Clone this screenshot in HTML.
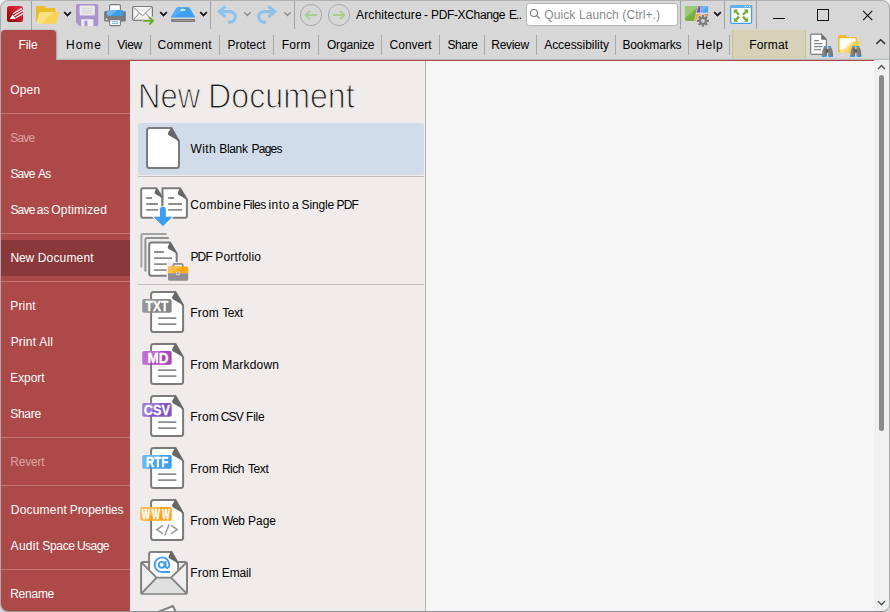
<!DOCTYPE html>
<html lang="en">
<head>
<meta charset="utf-8">
<title>Architecture - PDF-XChange Editor</title>
<style>
html,body{margin:0;padding:0;}
body{width:890px;height:612px;overflow:hidden;background:linear-gradient(#f2f2f2,#d8d8d8);font-family:"Liberation Sans",sans-serif;font-size:12px;color:#000;}
#win{position:absolute;left:0;top:0;width:888px;height:610px;border:1px solid #a8acac;border-top-color:#b0b2b2;border-bottom-color:#8f9292;border-radius:8px;overflow:hidden;background:#d7d7d7;}
#win *{position:absolute;box-sizing:border-box;}
.t{white-space:nowrap;line-height:16px;height:16px;}
/* title bar */
.vsep{width:1px;background:#a6a6a6;}
.chev{width:9px;height:6px;}
/* ribbon */
#ribbon{left:0;top:29px;width:888px;height:30px;}
.tab{top:7px;color:#000;}
.rsep{top:5px;width:1px;height:20px;background:#a9a9a9;}
#filetab{left:0;top:0;width:55px;height:31px;background:#ae4949;border-radius:4px 4px 0 0;box-shadow:1px 0 2px rgba(0,0,0,.25);}
#fmt{left:731px;top:0;width:74px;height:30px;background:#d6d1b7;border-left:1px solid #cdc28e;border-right:1px solid #cdc28e;}
#redline{left:0;top:59px;width:888px;height:1px;background:#b04848;}
#shade{left:56px;top:57px;width:832px;height:2px;background:linear-gradient(#ced0d0,#ced0d0 50%,#b6baba 50%);}
/* sidebar */
#side{left:0;top:60px;width:129px;height:551px;background:#ae4949;}
#side .t{left:10px;color:#fff;}
#side .dis{color:#d9a3a3;}
#side .sp{left:0;width:129px;height:1px;background:#c47474;}
#side .sel{left:0;width:129px;height:36px;background:#8b383a;}
/* middle */
#mid{left:129px;top:60px;width:295px;height:551px;background:#f0eceb;}
#mid .t{left:61px;}
#mid .sp{left:8px;width:286px;height:1px;background:#c2bebe;}
#hl{left:8px;top:62px;width:286px;height:52px;background:#d0dcea;border-radius:2px;}
#title{left:0;top:13px;font-size:34.5px;line-height:44px;height:44px;white-space:nowrap;color:#1c1c1c;-webkit-text-stroke:1.15px #f0eceb;}
#title span{top:0;transform-origin:0 0;}
#vline{left:424px;top:60px;width:1px;height:551px;background:#b4b2b2;}
#right{left:425px;top:60px;width:448px;height:551px;background:#f6f6f6;}
#sb{left:873px;top:59px;width:15px;height:552px;background:#f0f0f0;}
#thumb{left:5px;top:15px;width:5px;height:356px;background:#8a8a8a;border-radius:2.5px;}
</style>
</head>
<body>
<div id="win">
  <!-- TITLEBAR -->
  <!--TB-START-->
  <svg id="tbsvg" width="888" height="29" viewBox="1 1 888 29" style="left:0;top:0;">
    <defs>
      <linearGradient id="gapp" x1="1" y1="0" x2="0" y2="1">
        <stop offset="0" stop-color="#f02c44"/><stop offset=".45" stop-color="#c81c28"/><stop offset="1" stop-color="#7c0808"/>
      </linearGradient>
      <linearGradient id="gfold" gradientUnits="userSpaceOnUse" x1="40.1" y1="11.2" x2="54.8" y2="24.8">
        <stop offset="0" stop-color="#fde38c"/><stop offset=".5" stop-color="#fde080"/><stop offset=".51" stop-color="#fcd455"/><stop offset="1" stop-color="#fcd455"/>
      </linearGradient>
      <path id="chv" d="M0.8 0.9 L3.5 3.6 L6.2 0.9" fill="none" stroke-width="1.8" stroke-linecap="square"/>
      <clipPath id="capp"><rect x="7" y="6" width="16" height="16" rx="2.6"/></clipPath>
    </defs>
    <!-- separators -->
    <g fill="#a2a2a2">
      <rect x="31" y="1" width="1" height="29"/>
      <rect x="210" y="1" width="1" height="28"/>
      <rect x="294" y="1" width="1" height="28"/>
      <rect x="680" y="1" width="1" height="28"/>
      <rect x="724" y="1" width="1" height="28"/>
      <rect x="756" y="1" width="1" height="28"/>
    </g>
    <!-- app icon -->
    <rect x="7" y="6" width="16" height="16" rx="2.6" fill="url(#gapp)"/>
    <path d="M9.8 19 L12.5 14.5 L16.2 18.7 Z" fill="#fff"/>
    <g stroke="#fff" stroke-width="1.25" fill="none" clip-path="url(#capp)">
      <path d="M13 13.7 L21.9 8.4"/><path d="M14.2 15.7 L23.6 10.1"/><path d="M15.9 17.8 L23.6 13.2"/>
    </g>
    <!-- folder -->
    <path d="M36 7.2 Q36 6 37.2 6 H44.2 L46.6 7.9 H54.4 Q55.5 7.9 55.5 9 V22 H36 Z" fill="#ecbc2a"/>
    <path d="M40.6 12 H58.2 Q59.3 12 59 13.1 L56.2 23 Q55.9 23.8 55 23.8 H37.4 Q36.3 23.8 36.6 22.7 L39.4 12.8 Q39.7 12 40.6 12 Z" fill="url(#gfold)"/>
    <use href="#chv" x="64" y="11.8" stroke="#1a1a1a"/>
    <!-- save (disabled) -->
    <path d="M77.5 4 H96.8 Q98.3 4 98.3 5.5 V24.5 Q98.3 26 96.8 26 H79.6 L76 22.4 V5.5 Q76 4 77.5 4 Z" fill="#ab93cf"/>
    <rect x="79.6" y="5.6" width="15.2" height="10" rx="1.2" fill="#e9e9e9"/>
    <path d="M82 8.3 H92.4 M82 10.6 H92.4 M82 12.9 H92.4" stroke="#d2d2d2" stroke-width="1"/>
    <path d="M81.2 19.2 H93.4 V26 H81.2 Z" fill="#ededed"/>
    <rect x="84.4" y="20.8" width="3" height="5.2" fill="#ab93cf"/>
    <!-- printer -->
    <rect x="109.6" y="4.6" width="10.8" height="8" rx="1.2" fill="#fff" stroke="#7a7a7a" stroke-width="1.1"/>
    <path d="M105.6 11 H124.4 Q125.9 11 125.9 12.5 V20.1 Q125.9 21.6 124.4 21.6 H105.6 Q104.1 21.6 104.1 20.1 V12.5 Q104.1 11 105.6 11 Z" fill="#7b7b7b"/>
    <path d="M107 9.9 H122.9 V14.6 Q122.9 15.8 121.7 15.8 H108.2 Q107 15.8 107 14.6 Z" fill="#3e9ff2"/>
    <path d="M107 9.9 H117.6 L110.4 15.8 H108.2 Q107 15.8 107 14.6 Z" fill="#6db7f7"/>
    <rect x="105.8" y="18.6" width="1.5" height="1.5" rx=".5" fill="#fff"/>
    <rect x="109.6" y="19.6" width="10.8" height="6" rx="1.2" fill="#fff" stroke="#7a7a7a" stroke-width="1.1"/>
    <path d="M112 21.7 H118 M112 23.6 H118" stroke="#69b4f5" stroke-width=".9"/>
    <!-- mail -->
    <rect x="132.6" y="6.5" width="19.8" height="13.9" rx="1.3" fill="#f4f4f4" stroke="#7a7a7a" stroke-width="1.2"/>
    <path d="M133.2 7 L142.5 15.8 L151.8 7 M133.4 19.8 L139.4 13 M151.6 19.8 L145.6 13" fill="none" stroke="#858585" stroke-width="1"/>
    <path d="M142.4 19.2 H147.6 L149.6 16.6 H154 V24 H142.4 Z" fill="#d7d7d7"/>
    <path d="M143.2 20.9 H152.6 M149.2 17.2 L153 20.9 L149.2 24.6" fill="none" stroke="#6aab2c" stroke-width="1.9"/>
    <use href="#chv" x="160" y="11.8" stroke="#1a1a1a"/>
    <!-- scanner -->
    <path d="M177.6 7.2 H188.6 Q189.3 7.2 189.7 7.9 L194.9 16.5 Q195.4 17.4 194.4 17.4 H171.8 Q170.8 17.4 171.3 16.5 L176.5 7.9 Q176.9 7.2 177.6 7.2 Z" fill="#3e9ff2"/>
    <path d="M176.5 7.9 Q176.9 7.2 177.6 7.2 H186 L174 17.3 H171.8 Q170.8 17.3 171.3 16.4 Z" fill="#56adf6"/>
    <path d="M181 9.3 H185 L185.6 10.8 H180.4 Z" fill="#fff"/>
    <rect x="171" y="18.9" width="24.2" height="3" rx="1.2" fill="#7b7b7b"/>
    <rect x="172.6" y="19.9" width="21" height="1" fill="#9a9a9a"/>
    <use href="#chv" x="200" y="11.8" stroke="#1a1a1a"/>
    <!-- undo / redo (disabled) -->
    <g fill="none" stroke="#8fc1ea" stroke-width="3.1">
      <path d="M225.6 6.4 L219.2 11.6 L225.6 17 M219.4 11.6 H230.1 A5.25 5.25 0 0 1 230.1 22.1 H228"/>
      <path d="M268.4 6.4 L274.8 11.6 L268.4 17 M274.6 11.6 H263.9 A5.25 5.25 0 0 0 263.9 22.1 H266"/>
    </g>
    <path d="M244.7 12.8 L247.4 15.5 L250.1 12.8 M284.8 12.8 L287.5 15.5 L290.2 12.8" fill="none" stroke="#8e8e8e" stroke-width="1.35" stroke-linecap="square"/>
    <!-- nav circles -->
    <circle cx="311" cy="15" r="10.6" fill="none" stroke="#a9a9a9" stroke-width="1"/>
    <path d="M317 15 H306 M310.2 10.6 L305.6 15 L310.2 19.4" fill="none" stroke="#a8cd8c" stroke-width="1.8"/>
    <circle cx="339" cy="15" r="10.6" fill="none" stroke="#a9a9a9" stroke-width="1"/>
    <path d="M333 15 H344 M339.8 10.6 L344.4 15 L339.8 19.4" fill="none" stroke="#a8cd8c" stroke-width="1.8"/>
    <!-- quick launch -->
    <rect x="526.5" y="3.5" width="151" height="22" rx="3" fill="#fff" stroke="#b4b4b4"/>
    <circle cx="534" cy="13" r="3.5" fill="none" stroke="#7c7c7c" stroke-width="1.05"/>
    <path d="M536.5 15.5 L539.7 18.7" stroke="#7c7c7c" stroke-width="1.15"/>
    <!-- ui options -->
    <path d="M686.4 6 H697.4 L694.2 21 H686.4 Q685 21 685 19.6 V7.4 Q685 6 686.4 6 Z" fill="#79af40"/>
    <path d="M686.4 6 H697.4 L697 7.8 L685 18.4 V7.4 Q685 6 686.4 6 Z" fill="#9dc873"/>
    <path d="M698.3 6 H700.3 V12.6 H696.7 Z" fill="#7a48c4"/>
    <path d="M698.3 6 H700.3 V7.6 L697.6 9 Z" fill="#9468d6"/>
    <rect x="701.2" y="6" width="6.9" height="6.6" fill="#49a5f3"/>
    <path d="M701.2 6 H708.1 L701.2 12.2 Z" fill="#6db8f6"/>
    <path d="M696.4 14.1 H700.3 V21 H694.8 Z" fill="#fba626"/>
    <rect x="701.2" y="14.1" width="6.9" height="2" fill="#f2683c"/>
    <g transform="translate(702.95,20.85)">
      <g fill="#d7d7d7" stroke="#d7d7d7" stroke-width="1.6">
        <circle r="4.2"/>
        <g id="teeth"><rect x="-1.15" y="-5.9" width="2.3" height="11.8"/><rect x="-5.9" y="-1.15" width="11.8" height="2.3"/></g>
        <use href="#teeth" transform="rotate(45)"/>
      </g>
      <g fill="#7d7d7d">
        <circle r="4.2"/>
        <use href="#teeth"/>
        <use href="#teeth" transform="rotate(45)"/>
      </g>
      <circle r="1.9" fill="#d7d7d7"/>
    </g>
    <use href="#chv" x="714" y="11.8" stroke="#1a1a1a"/>
    <!-- fullscreen -->
    <rect x="730.65" y="5.65" width="20.9" height="17.7" rx="1.3" fill="#fff" stroke="#3e9ff2" stroke-width="1.3"/>
    <path d="M730 7.9 V6.3 Q730 5 731.3 5 H750.9 Q752.2 5 752.2 6.3 V7.9 Z" fill="#62b0f5"/>
    <g fill="#fff"><rect x="744.8" y="5.9" width="1.1" height="1.1"/><rect x="746.8" y="5.9" width="1.1" height="1.1"/><rect x="748.8" y="5.9" width="1.1" height="1.1"/></g>
    <g fill="#76ad3e">
      <path id="far" d="M733.8 9.5 H738.3 L736.9 10.9 L739.9 13.9 L738.2 15.6 L735.2 12.6 L733.8 14 Z"/>
      <use href="#far" transform="translate(1482,0) scale(-1,1)"/>
      <use href="#far" transform="translate(0,31.3) scale(1,-1)"/>
      <use href="#far" transform="translate(1482,31.3) scale(-1,-1)"/>
    </g>
    <!-- window buttons -->
    <rect x="773" y="18" width="12" height="1" fill="#111"/>
    <rect x="817.5" y="9.5" width="11" height="11" fill="none" stroke="#111" stroke-width="1"/>
    <path d="M863.1 10.9 L872.3 20.1 M872.3 10.9 L863.1 20.1" stroke="#111" stroke-width="1.15" fill="none"/>
  </svg>
  <div class="t" style="left:0;top:6px;"><span style="left:355px;letter-spacing:0.15px;">Architecture </span><span style="left:423px;">- </span><span style="left:430px;letter-spacing:-0.35px;">PDF-XChange </span><span style="left:507.9px;letter-spacing:-0.8px;">E..</span></div>
  <div class="t" style="left:543.3px;top:6px;letter-spacing:0.1px;color:#8a8a8a;">Quick Launch (Ctrl+.)</div>
  <!--TB-END-->

  <!-- RIBBON -->
  <div id="ribbon">
    <div id="fmt"></div>
    <div id="filetab"></div>
    <div class="t tab" style="left:17.4px;color:#fff;letter-spacing:-0.05px;">File</div>
    <div class="t tab" style="left:65.1px;letter-spacing:0.95px;">Home</div>
    <div class="rsep" style="left:107px;"></div>
    <div class="t tab" style="left:116.3px;letter-spacing:-0.3px;">View</div>
    <div class="rsep" style="left:149px;"></div>
    <div class="t tab" style="left:156.5px;letter-spacing:0.35px;">Comment</div>
    <div class="rsep" style="left:218px;"></div>
    <div class="t tab" style="left:226.5px;">Protect</div>
    <div class="rsep" style="left:272px;"></div>
    <div class="t tab" style="left:280.7px;letter-spacing:0.3px;">Form</div>
    <div class="rsep" style="left:317px;"></div>
    <div class="t tab" style="left:325.9px;letter-spacing:-0.15px;">Organize</div>
    <div class="rsep" style="left:380px;"></div>
    <div class="t tab" style="left:388.6px;">Convert</div>
    <div class="rsep" style="left:438px;"></div>
    <div class="t tab" style="left:446.4px;letter-spacing:-0.4px;">Share</div>
    <div class="rsep" style="left:483px;"></div>
    <div class="t tab" style="left:490.3px;letter-spacing:-0.3px;">Review</div>
    <div class="rsep" style="left:535px;"></div>
    <div class="t tab" style="left:543.2px;letter-spacing:-0.05px;">Accessibility</div>
    <div class="rsep" style="left:614px;"></div>
    <div class="t tab" style="left:621.4px;letter-spacing:-0.1px;">Bookmarks</div>
    <div class="rsep" style="left:687px;"></div>
    <div class="t tab" style="left:695.2px;letter-spacing:0.6px;">Help</div>
    <div class="rsep" style="left:728px;"></div>
    <div class="t tab" style="left:748.3px;letter-spacing:0.15px;">Format</div>
    <svg width="84" height="30" viewBox="805 30 84 30" style="left:804px;top:0;">
      <defs>
        <linearGradient id="gbin" x1="0" y1="0" x2="1" y2="0"><stop offset="0" stop-color="#8f8f8f"/><stop offset="1" stop-color="#6c6c6c"/></linearGradient>
        <g id="bino">
          <path d="M2.4 1.2 H5.4 V10 H0.4 L1 4.4 Z" fill="url(#gbin)"/>
          <path d="M6.7 1.2 H9.7 L11.1 4.4 L11.7 10 H6.7 Z" fill="url(#gbin)"/>
          <rect x="5" y="3.2" width="2.2" height="3.4" fill="#555"/>
          <rect x="2.5" y="0" width="2.9" height="1.3" fill="#2f9df4"/>
          <rect x="6.7" y="0" width="2.9" height="1.3" fill="#2f9df4"/>
          <rect x="0.4" y="9.7" width="4.7" height="1.3" fill="#2f9df4"/>
          <rect x="7" y="9.7" width="4.7" height="1.3" fill="#2f9df4"/>
        </g>
        <linearGradient id="gfold2" gradientUnits="userSpaceOnUse" x1="843" y1="40" x2="857" y2="53">
          <stop offset="0" stop-color="#fde594"/><stop offset=".5" stop-color="#fde28a"/><stop offset=".51" stop-color="#fcd455"/><stop offset="1" stop-color="#fcd455"/>
        </linearGradient>
      </defs>
      <!-- document -->
      <path d="M811.9 34.2 H821.4 L826.4 39.6 V53.2 Q826.4 54.4 825.2 54.4 H811.9 Q810.7 54.4 810.7 53.2 V35.4 Q810.7 34.2 811.9 34.2 Z" fill="#fff" stroke="#7a7a7a" stroke-width="1.2"/>
      <path d="M821.4 34.2 L826.6 39.8 H822.6 Q821.2 39.8 821.2 38.4 Z" fill="#6a6a6a"/>
      <path d="M814 40.6 H819 M814 43.6 H822.6 M814 46.6 H822.6 M814 49.6 H821" stroke="#8a8a8a" stroke-width="1.1" fill="none"/>
      <use href="#bino" x="821.4" y="46"/>
      <!-- folder -->
      <path d="M838 36.2 Q838 35 839.2 35 H845.4 L847.4 37.1 H855.8 Q857 37.1 857 38.3 V52.6 H838 Z" fill="#ecbc2a"/>
      <rect x="839.6" y="38.3" width="16" height="12" rx=".8" fill="#fff"/>
      <path d="M852.6 41.4 H860 Q861.2 41.4 860.8 42.5 L857.6 51.8 Q857.3 52.7 856.4 52.7 H839.4 Q838.6 52.7 839.4 52 Q846.5 47 851.2 42 Q851.8 41.4 852.6 41.4 Z" fill="url(#gfold2)"/>
      <use href="#bino" x="849.7" y="46"/>
      <!-- collapse chevron -->
      <path d="M876.9 43.4 L880.7 39.8 L884.5 43.4" fill="none" stroke="#303030" stroke-width="1.5" stroke-linecap="square"/>
    </svg>
  </div>
  <div id="shade"></div>
  <div id="redline"></div>

  <!-- SIDEBAR -->
  <div id="side">
    <div class="sel" style="top:179px;"></div>
    <div class="t" style="left:9.2px;top:21px;letter-spacing:0.2px;">Open</div>
    <div class="sp" style="top:52px;"></div>
    <div class="t dis" style="left:9.2px;top:69px;letter-spacing:-0.75px;">Save</div>
    <div class="t" style="left:0;top:105px;"><span style="left:9.4px;letter-spacing:-0.8px;">Save </span><span style="left:37px;letter-spacing:-0.8px;">As</span></div>
    <div class="t" style="left:0;top:141px;"><span style="left:9.4px;letter-spacing:-0.8px;">Save </span><span style="left:35.8px;letter-spacing:-0.2px;">as </span><span style="left:50.3px;letter-spacing:0.2px;">Optimized</span></div>
    <div class="sp" style="top:172px;"></div>
    <div class="t" style="left:0;top:189px;"><span style="left:9.6px;letter-spacing:-0.25px;">New </span><span style="left:36.8px;letter-spacing:0.15px;">Document</span></div>
    <div class="sp" style="top:220px;"></div>
    <div class="t" style="left:9.2px;top:237px;letter-spacing:0.2px;">Print</div>
    <div class="t" style="left:0;top:273px;"><span style="left:9.7px;letter-spacing:0.15px;">Print </span><span style="left:38.2px;letter-spacing:0.25px;">All</span></div>
    <div class="t" style="left:9.2px;top:309px;letter-spacing:-0.05px;">Export</div>
    <div class="t" style="left:9.2px;top:345px;letter-spacing:-0.25px;">Share</div>
    <div class="sp" style="top:376px;"></div>
    <div class="t dis" style="left:9.2px;top:393px;letter-spacing:-0.2px;">Revert</div>
    <div class="sp" style="top:424px;"></div>
    <div class="t" style="left:0;top:441px;"><span style="left:9.8px;letter-spacing:0.2px;">Document </span><span style="left:68.8px;letter-spacing:-0.1px;">Properties</span></div>
    <div class="t" style="left:0;top:477px;"><span style="left:9.6px;letter-spacing:0.3px;">Audit </span><span style="left:41.2px;letter-spacing:-0.3px;">Space </span><span style="left:76px;letter-spacing:-0.55px;">Usage</span></div>
    <div class="sp" style="top:508px;"></div>
    <div class="t" style="left:9.2px;top:525px;letter-spacing:-0.25px;">Rename</div>
  </div>

  <!-- MIDDLE -->
  <div id="mid">
    <div id="title"><span style="left:7.6px;transform:scaleX(.899);">New </span><span style="left:77.7px;transform:scaleX(.933);">Document</span></div>
    <div id="hl"></div>
    <div class="sp" style="top:115px;"></div>
    <div class="sp" style="top:223px;"></div>
<!--MIDSVG-->
    <svg width="295" height="551" viewBox="130 61 295 551" style="left:0;top:0;" font-family="'Liberation Sans',sans-serif">
      <defs>
        <g id="pg">
          <path d="M3.5 1 H25.4 L33 14.4 V38.5 Q33 41 30.5 41 H3.5 Q1 41 1 38.5 V3.5 Q1 1 3.5 1 Z" fill="#fff" stroke="#7b7b7b" stroke-width="2" stroke-linejoin="round"/>
          <path d="M25.4 0.2 L34 14.7 L23.2 8.5 Q21.1 7.3 22.3 5.2 Z" fill="#676767"/>
        </g>
        <path id="pgl" d="M8 27 H26.2 M8 33 H26.2" stroke="#8d8d8d" stroke-width="1.8" fill="none"/>
        <linearGradient id="lgTXT" x1="0" y1="0" x2="1" y2=".45"><stop offset=".5" stop-color="#969696"/><stop offset=".52" stop-color="#868686"/></linearGradient>
        <linearGradient id="lgMD" x1="0" y1="0" x2="1" y2=".45"><stop offset=".5" stop-color="#bd6fd0"/><stop offset=".52" stop-color="#a944be"/></linearGradient>
        <linearGradient id="lgCSV" x1="0" y1="0" x2="1" y2=".45"><stop offset=".5" stop-color="#9a7bd6"/><stop offset=".52" stop-color="#7f55c5"/></linearGradient>
        <linearGradient id="lgRTF" x1="0" y1="0" x2="1" y2=".45"><stop offset=".5" stop-color="#6db7f7"/><stop offset=".52" stop-color="#3e9ff2"/></linearGradient>
        <linearGradient id="lgWWW" x1="0" y1="0" x2="1" y2=".45"><stop offset=".5" stop-color="#ffb84c"/><stop offset=".52" stop-color="#ffa41c"/></linearGradient>
      </defs>
      <!-- With Blank Pages -->
      <use href="#pg" x="146" y="127"/>
      <!-- Combine -->
      <g>
        <path d="M143 188.3 H156.4 L162.5 198 V217.8 H143 Q141.2 217.8 141.2 216 V190.1 Q141.2 188.3 143 188.3 Z" fill="#fff" stroke="#7b7b7b" stroke-width="2" stroke-linejoin="round"/>
        <path d="M162.5 188.3 H180 L186.9 199.6 V216 Q186.9 217.8 185.1 217.8 H162.5 Z" fill="#fff" stroke="#7b7b7b" stroke-width="2" stroke-linejoin="round"/>
        <path d="M156.6 187.4 L163.4 198.6 L155.6 194.2 Q153.8 193.2 154.8 191.4 Z" fill="#676767"/>
        <path d="M180.2 187.4 L187.8 200.2 L178.8 195 Q177 194 178 192.2 Z" fill="#676767"/>
        <path d="M146.2 198 H152 M146.2 204 H158 M146.2 209.9 H158 M168.2 198 H174 M168.2 204 H182 M168.2 209.9 H182" stroke="#8d8d8d" stroke-width="1.8" fill="none"/>
        <path id="dar" d="M160 209.6 A2.9 2.9 0 0 1 165.8 209.6 V216.8 H172.4 L162.9 226.2 L153.4 216.8 H160 Z" fill="#3e9ff2" stroke="#f6f0ee" stroke-width="2" paint-order="stroke"/>
      </g>
      <!-- Portfolio -->
      <g fill="none" stroke-width="2">
        <path d="M141.4 267.6 V235.8 Q141.4 234 143.2 234 H166.6" stroke="#a2a2a2"/>
        <path d="M145.4 271.6 V239.9 Q145.4 238.1 147.2 238.1 H168.8" stroke="#909090"/>
        <path d="M151.4 242.5 H170 L176.7 253.6 V273.6 Q176.7 275.8 174.5 275.8 H151.4 Q149.2 275.8 149.2 273.6 V244.7 Q149.2 242.5 151.4 242.5 Z" fill="#fff" stroke="#7b7b7b" stroke-linejoin="round"/>
      </g>
      <path d="M170.2 241.6 L177.6 254 L168.8 249 Q167 248 168 246.2 Z" fill="#676767"/>
      <path d="M154.1 252 H163.8 M154.1 258.1 H172 M154.1 264.1 H172 M154.1 270.1 H172" stroke="#8d8d8d" stroke-width="1.8" fill="none"/>
      <g>
        <rect x="166.6" y="262" width="23" height="20.2" rx="2.5" fill="#f0eceb"/>
        <path d="M173.4 267 V265.6 Q173.4 263.9 175.1 263.9 H181.1 Q182.8 263.9 182.8 265.6 V267" fill="none" stroke="#8d8d8d" stroke-width="1.7"/>
        <path d="M168 273.3 V268.2 Q168 266.6 169.6 266.6 H186.6 Q188.2 266.6 188.2 268.2 V273.3 Z" fill="#ffa813"/>
        <path d="M168 273.3 V268.2 Q168 266.6 169.6 266.6 H180.2 L173.2 273.3 Z" fill="#ffbd45"/>
        <path d="M168 273.3 H188.2 V279.2 Q188.2 280.8 186.6 280.8 H169.6 Q168 280.8 168 279.2 Z" fill="#8f8f8f"/>
        <circle cx="178" cy="273.4" r="2.1" fill="#d0d0d0"/><circle cx="178" cy="273.4" r="0.9" fill="#8f8f8f"/>
      </g>
      <!-- TXT -->
      <use href="#pg" x="150.1" y="291.1"/><use href="#pgl" x="150.1" y="291.1"/>
      <rect x="142.2" y="299.1" width="29.5" height="13.6" rx="1.8" fill="url(#lgTXT)"/>
      <text x="145.6" y="310.8" font-size="14" font-weight="bold" fill="#fff" stroke="#fff" stroke-width=".3" textLength="22.7" lengthAdjust="spacingAndGlyphs">TXT</text>
      <!-- MD -->
      <use href="#pg" x="150.1" y="343.1"/><use href="#pgl" x="150.1" y="343.1"/>
      <rect x="142.2" y="351.1" width="29.5" height="13.6" rx="1.8" fill="url(#lgMD)"/>
      <text x="147.6" y="362.8" font-size="14" font-weight="bold" fill="#fff" stroke="#fff" stroke-width=".3" textLength="21" lengthAdjust="spacingAndGlyphs">MD</text>
      <!-- CSV -->
      <use href="#pg" x="150.1" y="395.1"/><use href="#pgl" x="150.1" y="395.1"/>
      <rect x="142.2" y="403.1" width="29.5" height="13.6" rx="1.8" fill="url(#lgCSV)"/>
      <text x="143.8" y="414.8" font-size="14" font-weight="bold" fill="#fff" stroke="#fff" stroke-width=".3" textLength="26.2" lengthAdjust="spacingAndGlyphs">CSV</text>
      <!-- RTF -->
      <use href="#pg" x="150.1" y="447.1"/><use href="#pgl" x="150.1" y="447.1"/>
      <rect x="142.2" y="455.1" width="29.5" height="13.6" rx="1.8" fill="url(#lgRTF)"/>
      <text x="146" y="466.8" font-size="14" font-weight="bold" fill="#fff" stroke="#fff" stroke-width=".3" textLength="22.2" lengthAdjust="spacingAndGlyphs">RTF</text>
      <!-- WWW -->
      <use href="#pg" x="150.1" y="499.1"/>
      <path d="M163 525.4 L156.8 529.6 L163 533.8 M171 525.4 L177.2 529.6 L171 533.8 M169.2 524.2 L164.8 535.4" fill="none" stroke="#9a9a9a" stroke-width="1.5"/>
      <rect x="140.2" y="507.1" width="31.5" height="13.6" rx="1.8" fill="url(#lgWWW)"/>
      <text transform="translate(142.1,518.8) scale(.6,1)" font-size="14" font-weight="bold" fill="#fff" stroke="#fff" stroke-width=".5" letter-spacing="3.4">WWW</text>
      <!-- Email -->
      <g>
        <path d="M141.1 564 Q141.1 562.1 143 562.1 H185.1 Q187 562.1 187 564 V591.9 Q187 593.8 185.1 593.8 H143 Q141.1 593.8 141.1 591.9 Z" fill="#efefef" stroke="#808080" stroke-width="2"/>
        <path d="M151 552 H171.4 L178.1 563.4 V570.7 L171 577.6 H156.6 L149.1 570.1 V553.9 Q149.1 552 151 552 Z" fill="#fff"/>
        <path d="M149.1 570.1 V553.9 Q149.1 552 151 552 H171.4 L178.1 563.4 V570.7" fill="none" stroke="#808080" stroke-width="2" stroke-linejoin="round"/>
        <path d="M171.4 550.6 L179.2 564 L170 558.8 Q167.8 557.6 168.9 555.4 Z" fill="#676767"/>
        <path d="M156.6 577.6 H171 L186.4 593.2 H141.7 Z" fill="#e0e0e0"/>
        <path d="M141.8 562.8 L156.6 577.6 H171 L186.3 562.8 M156.6 577.6 L141.8 593.2 M171 577.6 L186.3 593.2" fill="none" stroke="#808080" stroke-width="1.9" stroke-linejoin="round"/>
        <circle cx="161.7" cy="564.8" r="2.9" fill="none" stroke="#3e9ff2" stroke-width="1.9"/>
        <path d="M165.6 561 V566 Q165.6 568 167.4 568 Q169.3 567.6 169.3 564.6 A7.3 7.3 0 1 0 162 572 H170" fill="none" stroke="#3e9ff2" stroke-width="1.9"/>
      </g>
      <!-- next (clipped) -->
      <path d="M158 612 L173 606 L175.8 612" fill="#fff" stroke="#808080" stroke-width="2" stroke-linejoin="round"/>
    </svg>
<!--/MIDSVG-->
    <div class="t" style="left:0;top:80px;"><span style="left:60.6px;letter-spacing:0.35px;">With </span><span style="left:89.3px;letter-spacing:-0.35px;">Blank </span><span style="left:121.6px;letter-spacing:-0.8px;">Pages</span></div>
    <div class="t" style="left:0;top:136px;"><span style="left:60.2px;letter-spacing:0.45px;">Combine </span><span style="left:113px;letter-spacing:-0.55px;">Files </span><span style="left:138.4px;letter-spacing:0.55px;">into </span><span style="left:162.1px;">a </span><span style="left:171.6px;letter-spacing:-0.15px;">Single </span><span style="left:206.5px;letter-spacing:-0.8px;">PDF</span></div>
    <div class="t" style="left:0;top:188px;"><span style="left:60.4px;letter-spacing:-0.8px;">PDF </span><span style="left:85.3px;letter-spacing:0.2px;">Portfolio</span></div>
    <div class="t" style="left:0;top:244px;"><span style="left:60.3px;letter-spacing:0.15px;">From </span><span style="left:92.2px;letter-spacing:-0.4px;">Text</span></div>
    <div class="t" style="left:0;top:296px;"><span style="left:60.3px;letter-spacing:0.15px;">From </span><span style="left:92.2px;letter-spacing:0.2px;">Markdown</span></div>
    <div class="t" style="left:0;top:348px;"><span style="left:60.3px;letter-spacing:0.15px;">From </span><span style="left:90.7px;letter-spacing:-0.8px;">CSV </span><span style="left:116.1px;letter-spacing:-0.25px;">File</span></div>
    <div class="t" style="left:0;top:400px;"><span style="left:60.3px;letter-spacing:0.15px;">From </span><span style="left:91.9px;letter-spacing:-0.45px;">Rich </span><span style="left:118px;letter-spacing:-0.4px;">Text</span></div>
    <div class="t" style="left:0;top:452px;"><span style="left:60.3px;letter-spacing:0.15px;">From </span><span style="left:92px;letter-spacing:-0.8px;">Web </span><span style="left:118.1px;letter-spacing:-0.05px;">Page</span></div>
    <div class="t" style="left:0;top:504px;"><span style="left:60.3px;letter-spacing:0.15px;">From </span><span style="left:91.8px;letter-spacing:-0.15px;">Email</span></div>
  </div>
  <div id="vline"></div>
  <div id="right"></div>
  <div id="sb"><div id="thumb"></div>
    <svg width="15" height="552" viewBox="874 60 15 552" style="left:0;top:0;">
      <path d="M878.6 68.4 L881.5 65.5 L884.4 68.4 M878.6 601.8 L881.5 604.7 L884.4 601.8" fill="none" stroke="#555" stroke-width="1.4" stroke-linecap="square"/>
    </svg>
  </div>
</div>
</body>
</html>
